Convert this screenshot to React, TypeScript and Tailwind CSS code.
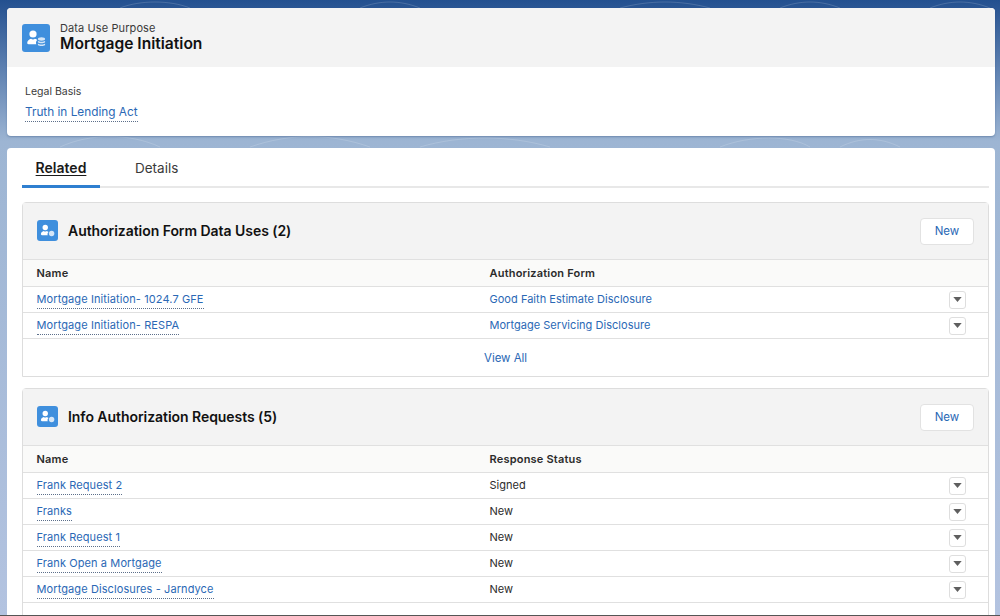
import { ReactNode } from "react";

const FONT = "font-['Inter','Noto_Sans',sans-serif]";

// record icon: person with a small stack beside it
const RecordIcon = ({ size, stack }: { size: number; stack?: boolean }) => (
  <div
    className={`flex shrink-0 items-center justify-center rounded-[3px] bg-[#3f8fdd] ${
      size === 28 ? "h-7 w-7" : "h-[21px] w-[21px]"
    }`}
  >
    <svg viewBox="0 0 28 28" className="h-full w-full" fill="#fff">
      <circle cx="11" cy="10" r="3.600" />
      <path d="M6.500 20.200c-.8 0-1.300-.5-1.300-1.100 0-2.600 2-3.800 3.900-4.400.7.900 3.100.9 3.800 0 1 .3 1.800.7 2.500 1.300-1 .7-1.400 1.700-1.400 2.800 0 .5.100.9.300 1.400z" />
      {stack ? (
        <g fill="#d5e6f7">
          <ellipse cx="19.500" cy="15" rx="3.600" ry="1.700" />
          <path d="M15.900 16.700c1.700 1.400 5.500 1.400 7.200 0v1.500c-1.700 1.400-5.500 1.400-7.200 0z" />
          <path d="M15.900 19.500c1.700 1.400 5.500 1.400 7.200 0v1.500c-1.700 1.400-5.500 1.400-7.200 0z" />
        </g>
      ) : (
        <circle cx="19.500" cy="18" r="3.600" fill="#d5e6f7" />
      )}
    </svg>
  </div>
);

const RecordLink = ({ children }: { children: ReactNode }) => (
  <a className="border-b border-dotted border-[#5c6f8a] pb-[2px] text-[11px] leading-[13px] tracking-[0.1px] text-[#2a68b5]">
    {children}
  </a>
);

const RowAction = () => (
  <button className="flex h-[18px] w-[17px] items-center justify-center rounded-[3px] border border-[#dedede] bg-white">
    <svg viewBox="0 0 10 6" className="h-[5px] w-[9px]" fill="#5f5f5f">
      <path d="M0 0h10L5 6z" />
    </svg>
  </button>
);

type Row = { name: string; value: string; link?: boolean };

const RelatedCard = ({
  title,
  column,
  rows,
  footer,
}: {
  title: string;
  column: string;
  rows: Row[];
  footer?: boolean;
}) => (
  <section className="rounded-t-[4px] border border-[#dddddd] bg-white">
    <div className="flex h-[56px] items-center justify-between bg-[#f3f3f3] pl-[13.500px] pr-[14px]">
      <div className="flex items-center gap-[10.500px] pb-[2px]">
        <RecordIcon size={21} />
        <h2 className="text-[14px] font-semibold tracking-[-0.05px] text-[#111111]">{title}</h2>
      </div>
      <button className="h-[27px] w-[54px] rounded-[4px] border border-[#e2e2e2] bg-white pt-[1px] text-[11.500px] text-[#2a68b5]">
        New
      </button>
    </div>
    <div className="grid h-[28px] grid-cols-[453px_1fr] items-center border-y border-[#e0e0e0] bg-[#fafaf9] pl-[13.500px] text-[11px] font-semibold tracking-[0.2px] text-[#2b2b2b]">
      <span>Name</span>
      <span>{column}</span>
    </div>
    {rows.map((row) => (
      <div
        key={row.name}
        className="grid h-[26px] grid-cols-[453px_1fr_39px] items-center border-b border-[#e0e0e0] pl-[13.500px]"
      >
        <div className="flex pt-[2px]">
          <RecordLink>{row.name}</RecordLink>
        </div>
        <span
          className={`text-[11px] tracking-[0.03px] ${row.link ? "text-[#2a68b5]" : "text-[#2b2b2b]"}`}
        >
          {row.value}
        </span>
        <RowAction />
      </div>
    ))}
    {footer ? (
      <div className="flex h-[37px] items-center justify-center pt-[2px] text-[11.500px] tracking-[-0.05px] text-[#2a68b5]">
        View All
      </div>
    ) : (
      <div className="h-[40px]" />
    )}
  </section>
);

export default function App() {
  return (
    <div
      className={`${FONT} relative flex h-[616px] w-[1000px] flex-col gap-[12px] overflow-hidden border-b border-[#555555] bg-gradient-to-b from-[#23508f] from-0% via-[#9db5d3] via-[23%] to-[#b3c3e0] pl-[7px] pr-[5px] pt-[8px]`}
    >
      {/* faint texture behind the panels */}
      <svg className="absolute left-0 top-0 h-[150px] w-[1000px]" fill="none" stroke="#fff" strokeOpacity="0.16">
        <path d="M60 147c30-14 70-14 100 0M250 147c40-14 80-14 120 0M420 147c40-12 90-12 130 0M720 147c30-12 70-12 90 0M840 147c20-10 40-10 60 0" />
        <path d="M120 8c20-8 50-8 70 0M360 8c20-8 40-8 60 0M620 8c30-8 60-8 90 0M780 8c20-8 40-8 60 0M930 8c20-8 40-8 60 0" />
      </svg>

      {/* Highlights panel */}
      <header className="relative h-[128px] shrink-0 overflow-hidden rounded-[4px] bg-white shadow-[0_1px_2px_rgba(30,60,110,0.35)]">
        <div className="flex h-[59px] items-center gap-[10px] bg-[#f3f3f3] pl-[15px]">
          <RecordIcon size={28} stack />
          <div>
            <p className="text-[11px] leading-[13px] tracking-[0.1px] text-[#3a3a3a]">Data Use Purpose</p>
            <h1 className="text-[15.600px] font-semibold leading-[18px] text-[#111111]">Mortgage Initiation</h1>
          </div>
        </div>
        <div className="pl-[18px] pt-[18px]">
          <p className="text-[10.500px] leading-[14px] text-[#3a3a3a]">Legal Basis</p>
          <div className="mt-[5px] flex">
            <a className="border-b border-dotted border-[#5c6f8a] pb-[1px] text-[11.800px] leading-[16px] text-[#2a68b5]">
              Truth in Lending Act
            </a>
          </div>
        </div>
      </header>

      {/* Tabs + related lists */}
      <main className="relative flex-1 rounded-t-[4px] bg-white pl-[15px] pr-[6px]">
        <nav className="flex h-[40px] border-b-2 border-[#e8e8e8]">
          <a className="-mb-[2px] flex w-[78px] items-center justify-center border-b-[3px] border-[#2f7fd0] pt-[2px] text-[14px] font-semibold text-[#1a1a1a] underline underline-offset-2">
            Related
          </a>
          <a className="ml-[35px] flex items-center pt-[2px] text-[13.500px] text-[#3a3a3a]">Details</a>
        </nav>
        <div className="mt-[14px] flex flex-col gap-[11px]">
          <RelatedCard
            title="Authorization Form Data Uses (2)"
            column="Authorization Form"
            footer
            rows={[
              { name: "Mortgage Initiation- 1024.7 GFE", value: "Good Faith Estimate Disclosure", link: true },
              { name: "Mortgage Initiation- RESPA", value: "Mortgage Servicing Disclosure", link: true },
            ]}
          />
          <RelatedCard
            title="Info Authorization Requests (5)"
            column="Response Status"
            rows={[
              { name: "Frank Request 2", value: "Signed" },
              { name: "Franks", value: "New" },
              { name: "Frank Request 1", value: "New" },
              { name: "Frank Open a Mortgage", value: "New" },
              { name: "Mortgage Disclosures - Jarndyce", value: "New" },
            ]}
          />
        </div>
      </main>
    </div>
  );
}
